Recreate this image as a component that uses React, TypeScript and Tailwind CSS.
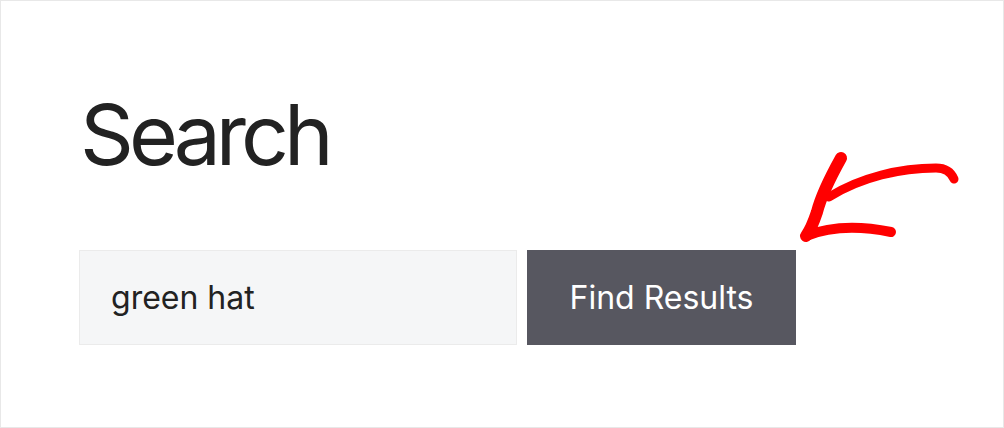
export default function App() {
  return (
    <main className="relative h-[428px] w-[1004px] border border-[#e8e8e8] bg-white font-['Inter',sans-serif] text-[#222]">
      <div className="pl-[78px] pt-[86px]">
        <h1 className="pl-[1px] text-[84px] font-normal leading-[96px] tracking-[-5px]">Search</h1>

        {/* Search form */}
        <form className="mt-[67px] flex gap-[10px]">
          <input
            type="text"
            defaultValue="green hat"
            className="h-[95px] w-[438px] border border-[#ebebeb] bg-[#f5f6f7] px-[31px] text-[32px] text-[#222] outline-none"
          />
          <button
            type="button"
            className="h-[95px] w-[269px] bg-[#575760] text-[32px] text-white"
          >
            Find Results
          </button>
        </form>
      </div>

      {/* Hand-drawn arrow */}
      <svg
        className="absolute left-[790px] top-[145px]"
        width="180"
        height="100"
        viewBox="0 0 180 100"
        fill="none"
        stroke="#ff0000"
        strokeLinecap="round"
        strokeLinejoin="round"
      >
        <path d="M50 12 C40 30 30 50 26 66 C22 78 18 86 15 90" strokeWidth="12" />
        <path d="M15 90 C40 80 70 80 100 86" strokeWidth="10" />
        <path d="M38 51 C70 31 110 22 145 22 C155 22 160 26 163 33" strokeWidth="9" />
      </svg>
    </main>
  )
}
